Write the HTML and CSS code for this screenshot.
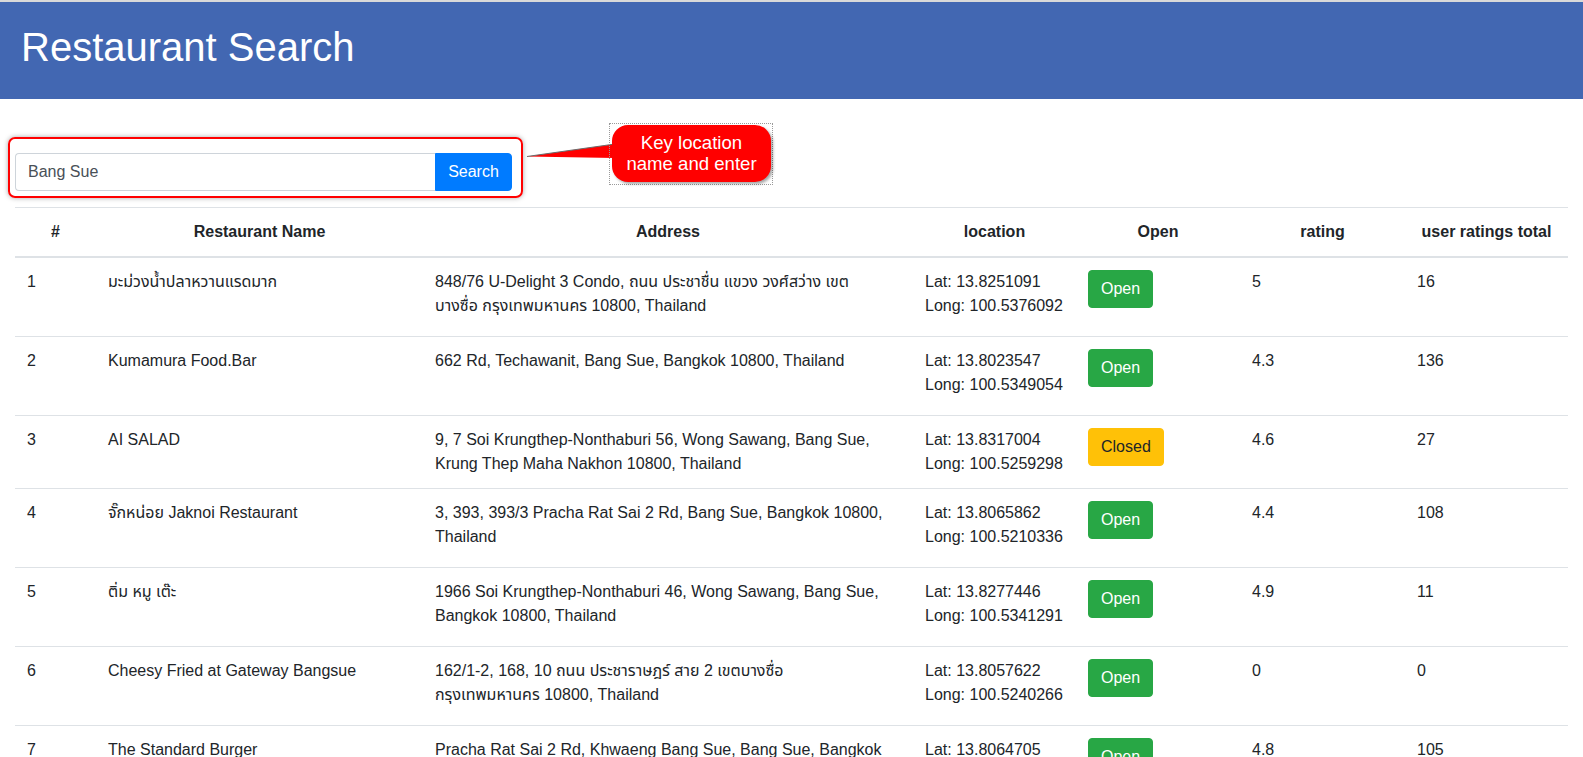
FILE: index.html
```html
<!DOCTYPE html>
<html lang="en">
<head>
<meta charset="utf-8">
<title>Restaurant Search</title>
<link rel="stylesheet" href="styles.css">
</head>
<body>
<header class="topbar">
  <h1 class="title">Restaurant Search</h1>
</header>
<main class="content">
  <section class="search">
    <form class="input-group" onsubmit="return false">
      <input class="search-input" type="text" value="Bang Sue">
      <button class="search-btn" type="submit">Search</button>
    </form>
    <div class="highlight"></div>
    <svg class="callout-tail" width="100" height="24" viewBox="0 0 100 24">
      <polygon points="0,12.5 88,0 88,14" fill="#ff0000"/>
      <line x1="0" y1="12.5" x2="88" y2="0" stroke="#6b6b6b" stroke-width="1.2"/>
    </svg>
    <div class="callout-frame">
      <div class="callout">Key location<br>name and enter</div>
    </div>
  </section>

  <table class="results">
    <colgroup>
      <col class="c-num"><col class="c-name"><col class="c-addr"><col class="c-loc"><col class="c-open"><col class="c-rate"><col class="c-total">
    </colgroup>
    <thead>
      <tr><th>#</th><th>Restaurant Name</th><th>Address</th><th>location</th><th>Open</th><th>rating</th><th>user ratings total</th></tr>
    </thead>
    <tbody>
      <tr>
        <td>1</td><td>มะม่วงน้ำปลาหวานแรดมาก</td>
        <td>848/76 U-Delight 3 Condo, ถนน ประชาชื่น แขวง วงศ์สว่าง เขต<br>บางซื่อ กรุงเทพมหานคร 10800, Thailand</td>
        <td>Lat: 13.8251091<br>Long: 100.5376092</td>
        <td><span class="badge badge-open">Open</span></td><td>5</td><td>16</td>
      </tr>
      <tr>
        <td>2</td><td>Kumamura Food.Bar</td>
        <td>662 Rd, Techawanit, Bang Sue, Bangkok 10800, Thailand</td>
        <td>Lat: 13.8023547<br>Long: 100.5349054</td>
        <td><span class="badge badge-open">Open</span></td><td>4.3</td><td>136</td>
      </tr>
      <tr>
        <td>3</td><td>AI SALAD</td>
        <td>9, 7 Soi Krungthep-Nonthaburi 56, Wong Sawang, Bang Sue, Krung Thep Maha Nakhon 10800, Thailand</td>
        <td>Lat: 13.8317004<br>Long: 100.5259298</td>
        <td><span class="badge badge-closed">Closed</span></td><td>4.6</td><td>27</td>
      </tr>
      <tr>
        <td>4</td><td>จั๊กหน่อย Jaknoi Restaurant</td>
        <td>3, 393, 393/3 Pracha Rat Sai 2 Rd, Bang Sue, Bangkok 10800, Thailand</td>
        <td>Lat: 13.8065862<br>Long: 100.5210336</td>
        <td><span class="badge badge-open">Open</span></td><td>4.4</td><td>108</td>
      </tr>
      <tr>
        <td>5</td><td>ติ่ม หมู เต๊ะ</td>
        <td>1966 Soi Krungthep-Nonthaburi 46, Wong Sawang, Bang Sue, Bangkok 10800, Thailand</td>
        <td>Lat: 13.8277446<br>Long: 100.5341291</td>
        <td><span class="badge badge-open">Open</span></td><td>4.9</td><td>11</td>
      </tr>
      <tr>
        <td>6</td><td>Cheesy Fried at Gateway Bangsue</td>
        <td>162/1-2, 168, 10 ถนน ประชาราษฎร์ สาย 2 เขตบางซื่อ<br>กรุงเทพมหานคร 10800, Thailand</td>
        <td>Lat: 13.8057622<br>Long: 100.5240266</td>
        <td><span class="badge badge-open">Open</span></td><td>0</td><td>0</td>
      </tr>
      <tr>
        <td>7</td><td>The Standard Burger</td>
        <td>Pracha Rat Sai 2 Rd, Khwaeng Bang Sue, Bang Sue, Bangkok 10800, Thailand</td>
        <td>Lat: 13.8064705<br>Long: 100.5297718</td>
        <td><span class="badge badge-open">Open</span></td><td>4.8</td><td>105</td>
      </tr>
    </tbody>
  </table>
</main>
</body>
</html>
```
FILE: styles.css
```css
* { box-sizing: border-box; }

html, body {
  margin: 0;
  padding: 0;
}

body {
  font-family: "Liberation Sans", Arial, "Noto Sans Thai", "Noto Sans", sans-serif;
  font-size: 16px;
  line-height: 1.5;
  color: #212529;
  background: #fff;
  border-top: 2px solid #d9d9d9;
  overflow: hidden;
}

.topbar {
  background: #4267b2;
  height: 97px;
  padding: 21px 21px 0;
}

.title {
  margin: 0;
  font-size: 40px;
  font-weight: 400;
  line-height: 48px;
  color: #fff;
}

.content {
  padding: 0 15px;
}

.search {
  position: relative;
  padding-top: 54px;
  padding-bottom: 16px;
}

.input-group {
  display: flex;
  width: 497px;
  height: 38px;
  margin: 0;
}

.search-input {
  flex: 1;
  min-width: 0;
  height: 38px;
  padding: 6px 12px;
  border: 1px solid #ced4da;
  border-right: 0;
  border-radius: 4px 0 0 4px;
  font: inherit;
  color: #495057;
  background: #fff;
  outline: none;
}

.search-btn {
  width: 77px;
  height: 38px;
  padding: 6px 12px;
  border: 1px solid #007bff;
  border-radius: 0 4px 4px 0;
  background: #007bff;
  color: #fff;
  font: inherit;
}

.highlight {
  position: absolute;
  left: -7px;
  top: 38px;
  width: 515px;
  height: 61px;
  border: 2px solid #ff0000;
  border-radius: 7px;
  box-shadow: 0 0 5px rgba(0, 0, 0, 0.35);
  pointer-events: none;
}

.callout-tail {
  position: absolute;
  left: 512px;
  top: 45px;
  overflow: visible;
}

.callout-frame {
  position: absolute;
  left: 594px;
  top: 24px;
  width: 164px;
  height: 62px;
  border: 1px dotted #9a9a9a;
  padding: 1px 2px 2px 2px;
}

.callout {
  width: 159px;
  height: 57px;
  background: #ff0000;
  border-radius: 16px;
  box-shadow: 2px 2px 3px rgba(0, 0, 0, 0.35);
  color: #fff;
  text-align: center;
  font-size: 18.6px;
  line-height: 21px;
  padding-top: 7px;
}

.results {
  width: 100%;
  table-layout: fixed;
  border-collapse: separate;
  border-spacing: 0;
}

.c-num { width: 81px; }
.c-name { width: 327px; }
.c-addr { width: 490px; }
.c-loc { width: 163px; }
.c-open { width: 164px; }
.c-rate { width: 165px; }
.c-total { width: 163px; }

.results th {
  padding: 12px;
  line-height: 24px;
  font-weight: 700;
  text-align: center;
  border-top: 1px solid #dee2e6;
  border-bottom: 2px solid #dee2e6;
  white-space: nowrap;
}

.results td {
  padding: 12px;
  line-height: 24px;
  vertical-align: top;
  text-align: left;
}

.results tbody tr + tr td {
  border-top: 1px solid #dee2e6;
}

.badge {
  display: inline-block;
  vertical-align: top;
  padding: 6px 12px;
  border: 1px solid transparent;
  border-radius: 4px;
  line-height: 24px;
  font-size: 16px;
}

.badge-open {
  background: #28a745;
  border-color: #28a745;
  color: #fff;
  margin-bottom: 16px;
}

.badge-closed {
  background: #ffc107;
  border-color: #ffc107;
  color: #212529;
}
```
